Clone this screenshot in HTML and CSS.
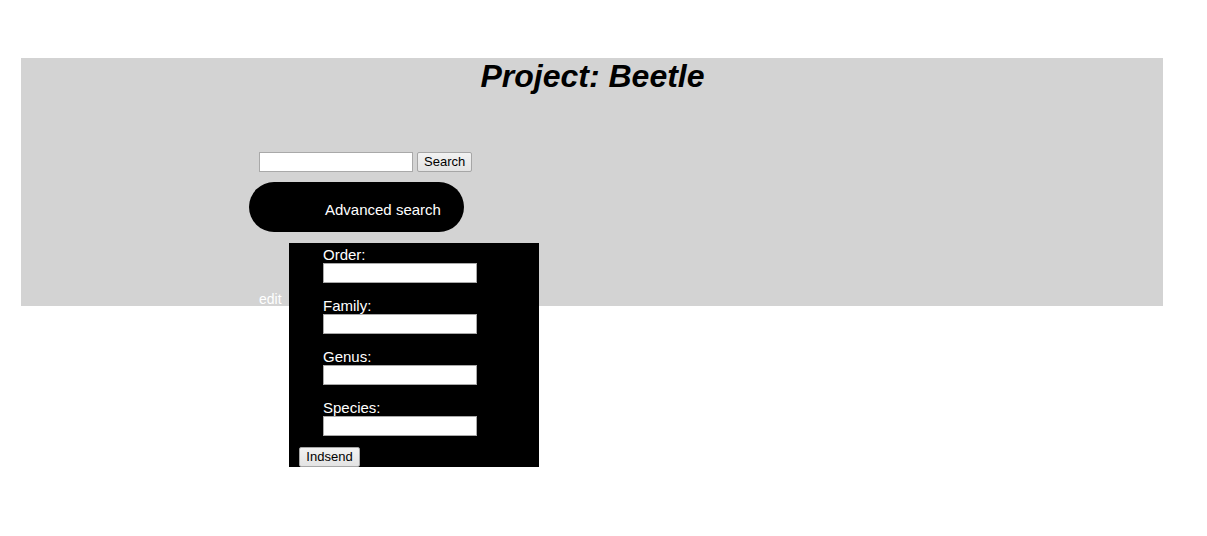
FILE: index.html
```html
<!DOCTYPE html>
<html>
<head>
<meta charset="utf-8">
<title>Project: Beetle</title>
<link rel="stylesheet" href="styles.css">
</head>
<body>
<header class="header">
  <h1 class="title">Project: Beetle</h1>
  <div class="nav">
    <form class="search">
      <input class="search-input" type="text">
      <button class="btn" type="button">Search</button>
    </form>
    <div class="adv">
      <div class="pill">Advanced search</div>
      <form class="dropdown">
        <div class="field">
          <label class="lbl">Order:</label>
          <input class="inp" type="text">
        </div>
        <div class="field">
          <label class="lbl">Family:</label>
          <input class="inp" type="text">
        </div>
        <div class="field">
          <label class="lbl">Genus:</label>
          <input class="inp" type="text">
        </div>
        <div class="field">
          <label class="lbl">Species:</label>
          <input class="inp" type="text">
        </div>
        <button class="btn btn-send" type="button">Indsend</button>
      </form>
    </div>
    <a class="edit">edit</a>
  </div>
</header>
</body>
</html>
```

FILE: styles.css
```css
html, body {
  margin: 0;
  padding: 0;
  background: #ffffff;
  font-family: "Liberation Sans", Arial, sans-serif;
}

body {
  min-height: 536px;
  padding-top: 58px;
  box-sizing: border-box;
}

.header {
  margin: 0 0 0 21px;
  width: 1142px;
  background: #d3d3d3;
  display: flex;
  flex-direction: column;
}

.title {
  margin: 0;
  font-size: 32px;
  font-weight: bold;
  font-style: italic;
  text-align: center;
  line-height: 37px;
  color: #000;
  padding-left: 1px;
}

.nav {
  display: flex;
  flex-direction: column;
  align-items: flex-start;
  padding-left: 228px;
  margin-top: 57px;
}

.search {
  display: flex;
  gap: 4px;
  margin: 0 0 0 10px;
}

.search-input, .inp {
  box-sizing: border-box;
  width: 154px;
  height: 20px;
  margin: 0;
  padding: 0 2px;
  border: 1px solid #a9a9a9;
  background: #fff;
}

.btn {
  box-sizing: border-box;
  height: 20px;
  padding: 0 6px;
  margin: 0;
  font-family: "Liberation Sans", Arial, sans-serif;
  font-size: 13px;
  line-height: 18px;
  color: #000;
  background: linear-gradient(#f2f2f2, #e3e3e3);
  border: 1px solid #a6a6a6;
  border-radius: 2px;
}

.search .btn {
  width: 55px;
}

.adv {
  position: relative;
  margin-top: 10px;
}

.pill {
  box-sizing: border-box;
  width: 215px;
  height: 50px;
  border-radius: 25px;
  background: #000;
  color: #fff;
  font-size: 15px;
  line-height: 50px;
  padding: 3px 0 0 76px;
}

.dropdown {
  position: absolute;
  left: 40px;
  top: 61px;
  box-sizing: border-box;
  width: 250px;
  height: 224px;
  margin: 0;
  background: #000;
  padding: 3px 0 0 34px;
  display: flex;
  flex-direction: column;
  align-items: flex-start;
  gap: 14px;
  z-index: 2;
}

.field {
  display: flex;
  flex-direction: column;
}

.lbl {
  color: #fff;
  font-size: 15px;
  line-height: 17px;
}

.btn-send {
  width: 61px;
  margin: -3px 0 0 -24px;
}

.edit {
  margin: 61px 0 0 10px;
  color: #fff;
  font-size: 14px;
  line-height: 13px;
}
```
